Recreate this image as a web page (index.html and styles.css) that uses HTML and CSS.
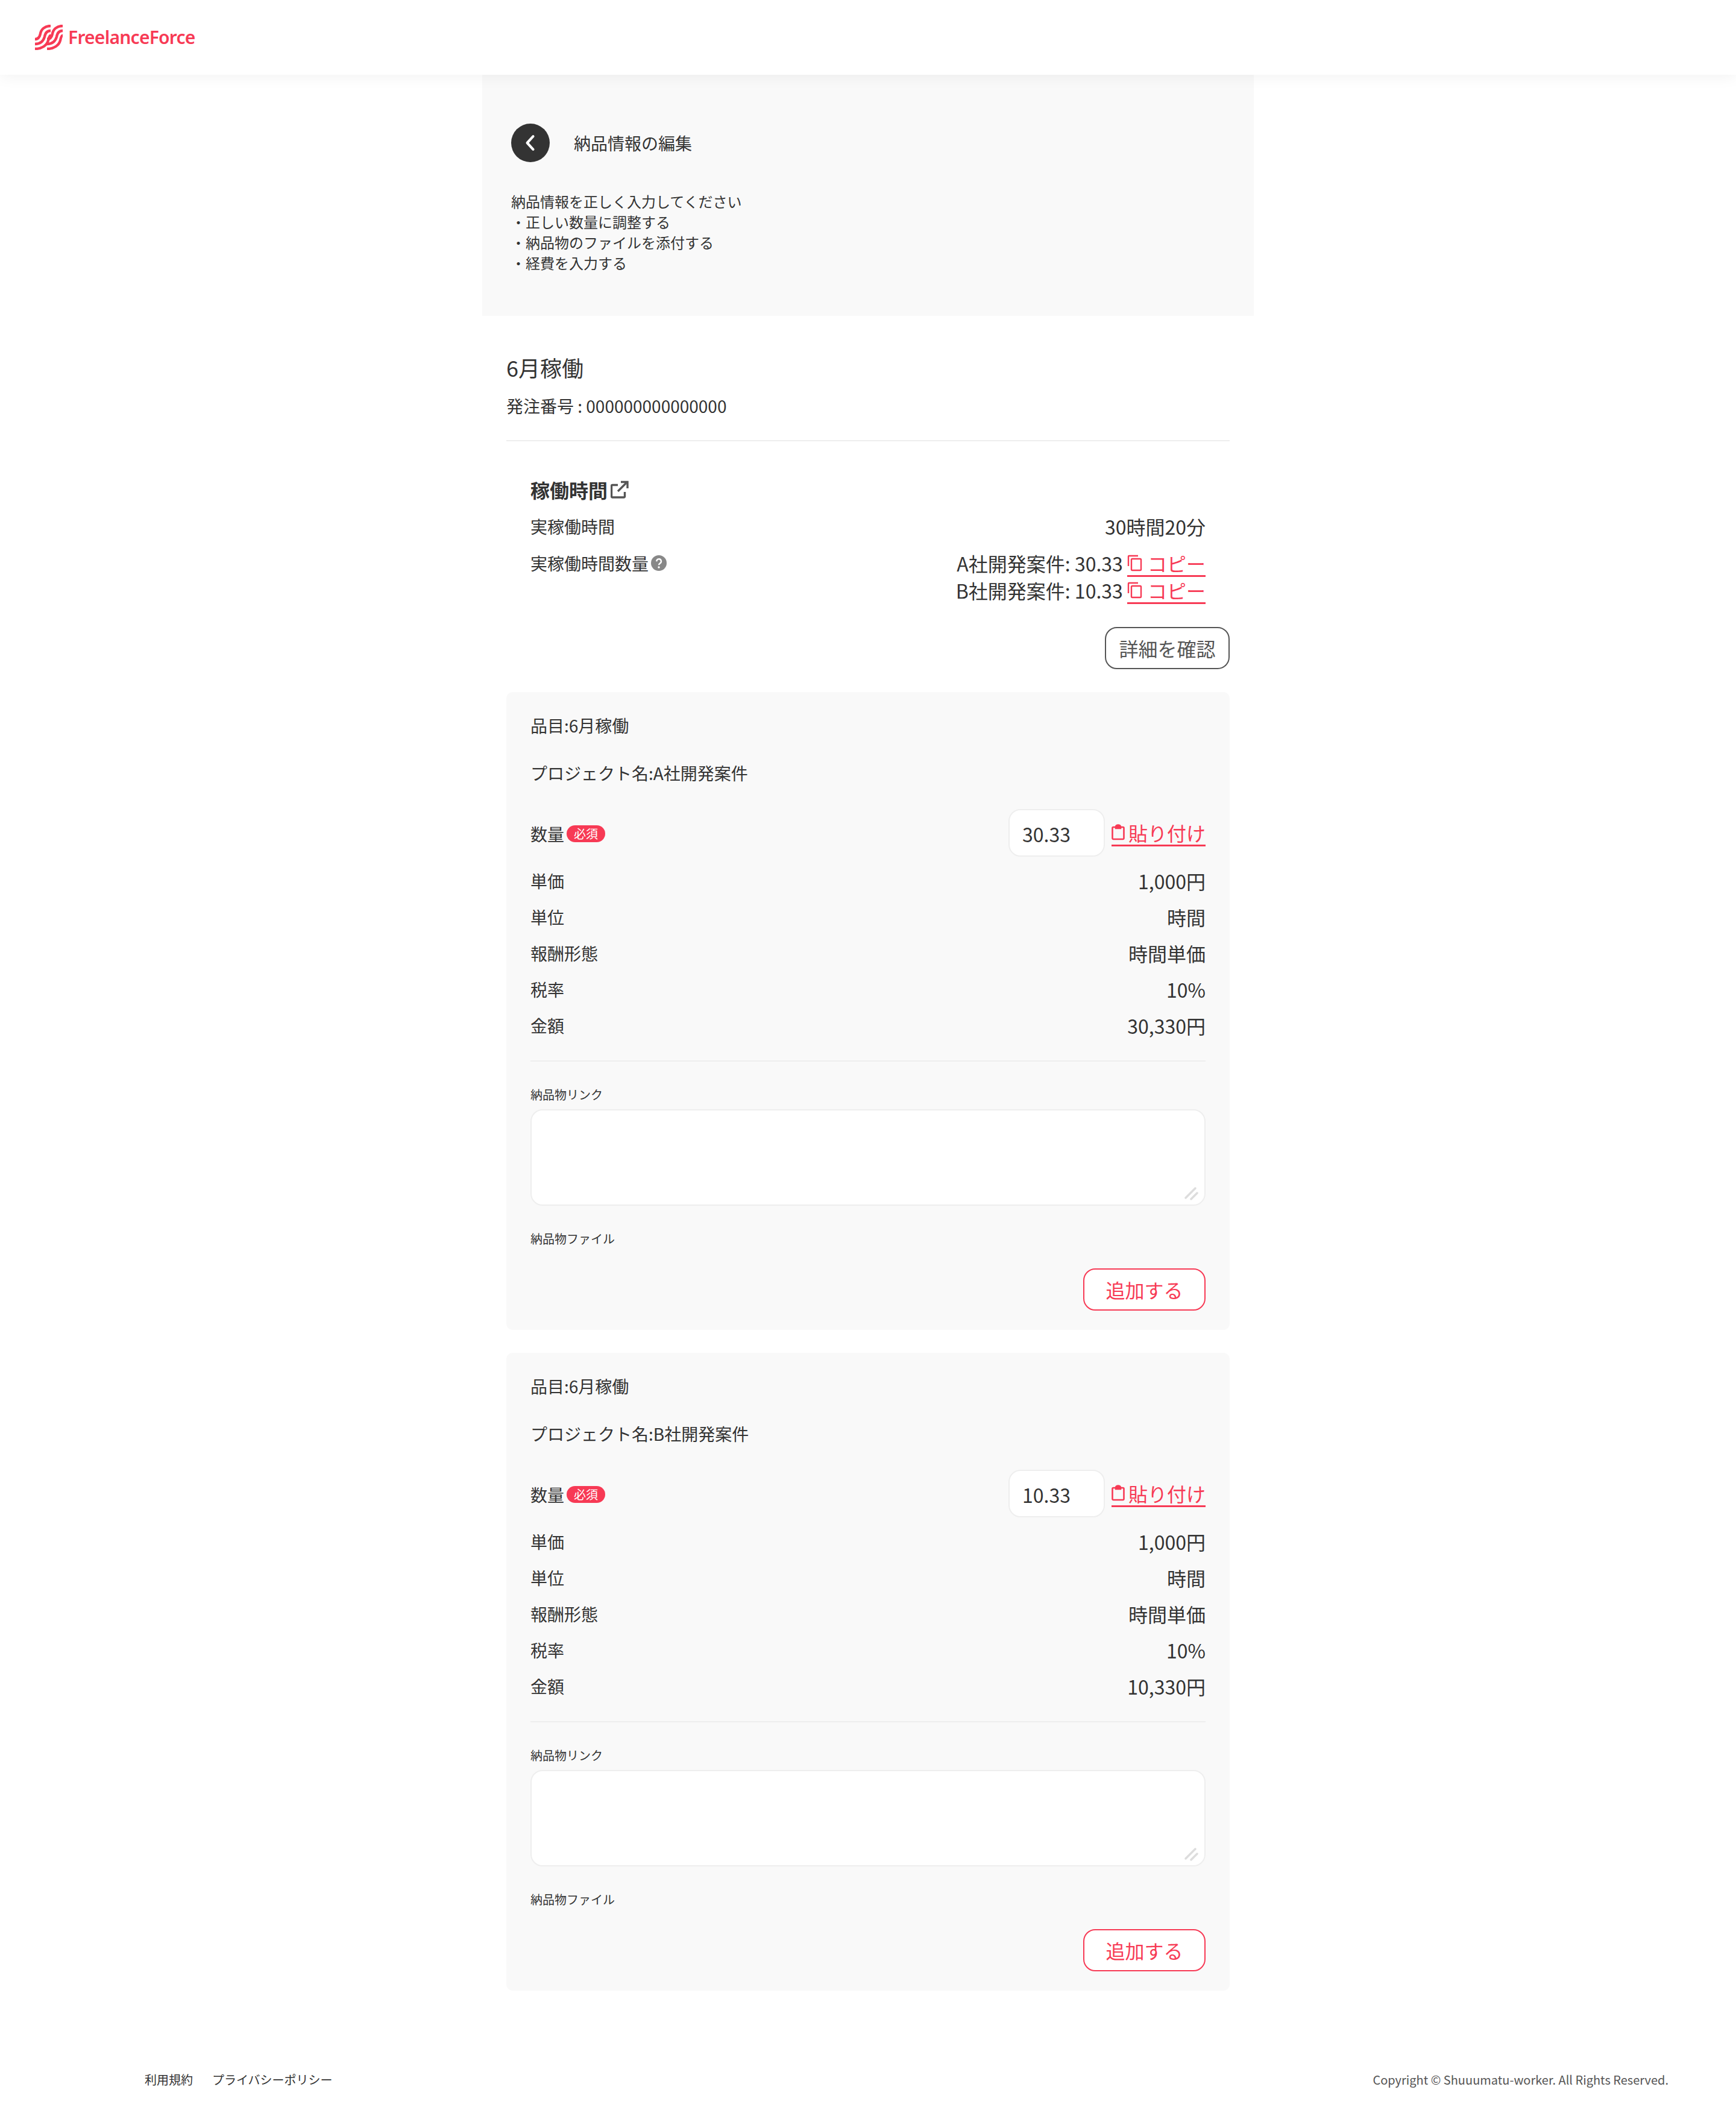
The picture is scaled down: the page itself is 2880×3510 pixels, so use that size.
FILE: index.html
```html
<!DOCTYPE html>
<html lang="ja">
<head>
<meta charset="utf-8">
<title>納品情報の編集</title>
<link rel="stylesheet" href="styles.css">
</head>
<body>
<header class="site-header">
  <svg class="logo-mark" viewBox="0 0 46 42" fill="none" stroke="currentColor" stroke-width="4.4">
    <g>
      <path d="M0 24C6 24 8 20 9 15C10 8 16 2 26 2"/>
      <path d="M0 32C10 32 14 27 16 20C17 14 20 10 26 10"/>
      <path d="M0 40C12 40 20 34 22 26C23 21 24 18 26 18"/>
    </g>
    <g class="wave-two">
      <path d="M0 24C6 24 8 20 9 15C10 8 16 2 26 2"/>
      <path d="M0 32C10 32 14 27 16 20C17 14 20 10 26 10"/>
      <path d="M0 40C12 40 20 34 22 26C23 21 24 18 26 18"/>
    </g>
  </svg>
  <span class="logo-text">FreelanceForce</span>
</header>

<main class="page">
  <section class="intro">
    <div class="intro-head">
      <a class="back" href="#">
        <svg viewBox="0 0 20 20" fill="none" stroke="currentColor" stroke-width="2.300" stroke-linecap="round" stroke-linejoin="round"><path d="M12.500 4L7 10l5.500 6"/></svg>
      </a>
      <h1 class="intro-title">納品情報の編集</h1>
    </div>
    <div class="intro-text">
      <p>納品情報を正しく入力してください</p>
      <p>・正しい数量に調整する</p>
      <p>・納品物のファイルを添付する</p>
      <p>・経費を入力する</p>
    </div>
  </section>

  <section class="content">
    <div class="order">
      <h2 class="order-title">6月稼働</h2>
      <p class="order-number">発注番号 : 000000000000000</p>
    </div>

    <div class="work">
      <h3 class="work-title">稼働時間
        <svg class="ext-icon" viewBox="0 0 30 30" fill="none" stroke="currentColor" stroke-width="3.400"><path d="M12 7.500H3a1.500 1.500 0 0 0-1.500 1.500v17.500A1.500 1.500 0 0 0 3 28h19a1.500 1.500 0 0 0 1.500-1.500V19"/><path d="M12 18L26 4"/><path d="M17 2.500h11V13"/></svg>
      </h3>
      <div class="work-row">
        <span class="label">実稼働時間</span>
        <span class="value">30時間20分</span>
      </div>
      <div class="work-row work-row-qty">
        <span class="label label-help">実稼働時間数量
          <svg class="help-icon" viewBox="0 0 26 26"><circle cx="13" cy="13" r="13" fill="#888"/><path d="M9.300 10.200a3.800 3.800 0 1 1 5.700 3.200c-1.300.8-2 1.400-2 2.900" fill="none" stroke="#fff" stroke-width="2.400"/><circle cx="13" cy="20" r="1.700" fill="#fff"/></svg>
        </span>
        <div class="copy-list">
          <div class="copy-line">A社開発案件: 30.33 <a class="copy-link" href="#"><svg class="copy-icon" viewBox="0 0 26 28" fill="none" stroke="currentColor" stroke-width="2.400"><path d="M2 19V3a1 1 0 0 1 1-1h15"/><rect x="7" y="7" width="16" height="19" rx="1.500"/></svg><span>コピー</span></a></div>
          <div class="copy-line">B社開発案件: 10.33 <a class="copy-link" href="#"><svg class="copy-icon" viewBox="0 0 26 28" fill="none" stroke="currentColor" stroke-width="2.400"><path d="M2 19V3a1 1 0 0 1 1-1h15"/><rect x="7" y="7" width="16" height="19" rx="1.500"/></svg><span>コピー</span></a></div>
        </div>
      </div>
      <div class="work-action"><a class="btn btn-gray" href="#">詳細を確認</a></div>
    </div>

    <article class="card">
      <p class="card-line card-item">品目:6月稼働</p>
      <p class="card-line card-project">プロジェクト名:A社開発案件</p>
      <div class="qty">
        <span class="qty-label"><span class="label">数量</span><span class="badge">必須</span></span>
        <span class="qty-field">
          <input class="qty-input" type="text" value="30.33">
          <a class="paste-link" href="#"><svg class="paste-icon" viewBox="0 0 22 27" fill="none" stroke="currentColor" stroke-width="2.600"><path d="M6 5H3a1.500 1.500 0 0 0-1.500 1.500v17A1.500 1.500 0 0 0 3 25h16a1.500 1.500 0 0 0 1.500-1.500v-17A1.500 1.500 0 0 0 19 5h-3"/><path d="M7 7V4.500a4 3 0 0 1 8 0V7z" fill="currentColor"/></svg><span>貼り付け</span></a>
        </span>
      </div>
      <dl class="rows">
        <div class="row"><dt class="label">単価</dt><dd class="value">1,000円</dd></div>
        <div class="row"><dt class="label">単位</dt><dd class="value">時間</dd></div>
        <div class="row"><dt class="label">報酬形態</dt><dd class="value">時間単価</dd></div>
        <div class="row"><dt class="label">税率</dt><dd class="value">10%</dd></div>
        <div class="row"><dt class="label">金額</dt><dd class="value">30,330円</dd></div>
      </dl>
      <hr class="rule">
      <label class="small-label small-link">納品物リンク</label>
      <div class="area-wrap">
        <textarea class="link-area"></textarea>
        <svg class="grip" viewBox="0 0 24 24" fill="none" stroke="#ddd" stroke-width="3.500" stroke-linecap="round"><path d="M3 19L19 3"/><path d="M12 21L22 11"/></svg>
      </div>
      <label class="small-label small-file">納品物ファイル</label>
      <div class="card-action"><a class="btn btn-red" href="#">追加する</a></div>
    </article>

    <article class="card">
      <p class="card-line card-item">品目:6月稼働</p>
      <p class="card-line card-project">プロジェクト名:B社開発案件</p>
      <div class="qty">
        <span class="qty-label"><span class="label">数量</span><span class="badge">必須</span></span>
        <span class="qty-field">
          <input class="qty-input" type="text" value="10.33">
          <a class="paste-link" href="#"><svg class="paste-icon" viewBox="0 0 22 27" fill="none" stroke="currentColor" stroke-width="2.600"><path d="M6 5H3a1.500 1.500 0 0 0-1.500 1.500v17A1.500 1.500 0 0 0 3 25h16a1.500 1.500 0 0 0 1.500-1.500v-17A1.500 1.500 0 0 0 19 5h-3"/><path d="M7 7V4.500a4 3 0 0 1 8 0V7z" fill="currentColor"/></svg><span>貼り付け</span></a>
        </span>
      </div>
      <dl class="rows">
        <div class="row"><dt class="label">単価</dt><dd class="value">1,000円</dd></div>
        <div class="row"><dt class="label">単位</dt><dd class="value">時間</dd></div>
        <div class="row"><dt class="label">報酬形態</dt><dd class="value">時間単価</dd></div>
        <div class="row"><dt class="label">税率</dt><dd class="value">10%</dd></div>
        <div class="row"><dt class="label">金額</dt><dd class="value">10,330円</dd></div>
      </dl>
      <hr class="rule">
      <label class="small-label small-link">納品物リンク</label>
      <div class="area-wrap">
        <textarea class="link-area"></textarea>
        <svg class="grip" viewBox="0 0 24 24" fill="none" stroke="#ddd" stroke-width="3.500" stroke-linecap="round"><path d="M3 19L19 3"/><path d="M12 21L22 11"/></svg>
      </div>
      <label class="small-label small-file">納品物ファイル</label>
      <div class="card-action"><a class="btn btn-red" href="#">追加する</a></div>
    </article>
  </section>
</main>

<footer class="site-footer">
  <nav class="footer-links">
    <a href="#">利用規約</a>
    <a href="#">プライバシーポリシー</a>
  </nav>
  <small class="copyright">Copyright © Shuuumatu-worker. All Rights Reserved.</small>
</footer>
</body>
</html>
```

FILE: styles.css
```css
* { box-sizing: border-box; }
html, body { margin: 0; padding: 0; background: #fff; }
body {
  font-family: "Noto Sans CJK JP", "Noto Sans", sans-serif;
  font-weight: 400;
  color: #333;
  font-size: 28px;
}
h1, h2, h3, p, dl, dd { margin: 0; font-weight: 400; }
a { color: inherit; text-decoration: none; }

.site-header {
  position: relative;
  height: 124px;
  display: flex;
  align-items: center;
  gap: 9px;
  padding: 0 58px;
  background: #fff;
  color: #f73a55;
  box-shadow: 0 4px 24px rgba(0, 0, 0, 0.05);
}
.logo-mark { width: 46px; height: 42px; flex: none; margin-top: -1px; }
.wave-two { transform: translateX(20px); }
.logo-text { font-family: "Noto Sans", sans-serif; font-size: 30px; font-weight: 600; line-height: 1; letter-spacing: -0.75px; }

.page { width: 1280px; margin: 0 auto; }

.intro { height: 400px; padding: 81px 48px 0; background: #f9f9f9; }
.intro-head { display: flex; align-items: center; gap: 40px; }
.back {
  width: 64px;
  height: 64px;
  border-radius: 50%;
  display: flex;
  align-items: center;
  justify-content: center;
  background: #333;
  color: #fff;
}
.back svg { width: 36px; height: 36px; }
.intro-title { font-size: 28px; line-height: 64px; }
.intro-text { margin-top: 48px; font-size: 24px; line-height: 34px; }

.content { padding: 0 40px; }

.order { padding: 59px 0 37px; border-bottom: 2px solid #eee; }
.order-title { font-size: 36px; line-height: 52px; }
.order-number { margin-top: 18px; font-size: 28px; line-height: 40px; }

.work { padding: 0 0 0 40px; }
.work-title {
  display: flex;
  align-items: center;
  gap: 5px;
  margin-top: 57px;
  font-size: 32px;
  font-weight: 700;
  line-height: 46px;
}
.ext-icon { width: 30px; height: 30px; color: #555; }
.work-row { display: flex; justify-content: space-between; margin-top: 16px; padding-right: 40px; line-height: 44px; }
.work-row-qty { margin-top: 17px; align-items: flex-start; }
.label { font-size: 28px; }
.label-help { display: flex; align-items: center; gap: 4px; }
.help-icon { width: 26px; height: 26px; }
.value { font-size: 32px; }
.copy-list { font-size: 32px; text-align: right; }
.copy-line { line-height: 44px; }
.copy-link {
  display: inline-flex;
  align-items: center;
  height: 45px;
  padding-top: 1px;
  color: #f73a55;
  border-bottom: 3px solid #f73a55;
  line-height: 36px;
  vertical-align: top;
}
.copy-icon { width: 26px; height: 28px; margin-right: 8px; }
.work-action { display: flex; justify-content: flex-end; margin-top: 38px; }

.btn {
  display: flex;
  align-items: center;
  justify-content: center;
  height: 70px;
  border-radius: 20px;
  background: #fff;
  font-size: 32px;
}
.btn-gray { width: 207px; border: 2.500px solid #555; color: #555; }
.btn-red { width: 203px; border: 2.500px solid #f73a55; color: #f73a55; }

.card { margin-top: 38px; padding: 35px 40px 32px; border-radius: 10px; background: #f9f9f9; }
.card-line { font-size: 28px; line-height: 40px; }
.card-project { margin-top: 39px; }
.qty { display: flex; justify-content: space-between; align-items: center; margin-top: 40px; height: 79px; }
.qty-label { display: flex; align-items: center; gap: 4px; padding-top: 2px; }
.badge {
  width: 64px;
  height: 28px;
  border-radius: 14px;
  background: #f73a55;
  color: #fff;
  font-size: 20px;
  line-height: 28px;
  text-align: center;
}
.qty-field { display: flex; align-items: center; gap: 11px; }
.qty-input {
  width: 160px;
  height: 79px;
  padding: 2px 0 0 21px;
  border: 2px solid #eee;
  border-radius: 20px;
  background: #fff;
  color: #333;
  font: 400 32px "Noto Sans CJK JP", "Noto Sans", sans-serif;
  outline: none;
}
.paste-link {
  display: inline-flex;
  align-items: center;
  height: 45px;
  padding-top: 2px;
  color: #f73a55;
  font-size: 32px;
  line-height: 40px;
  border-bottom: 3px solid #f73a55;
}
.paste-icon { width: 22px; height: 27px; margin: 0 6px 2px 0; }

.rows { margin-top: 10px; }
.row { display: flex; justify-content: space-between; align-items: center; height: 60px; }
.rule { margin: 28px 0 0; border: 0; border-top: 2px solid #eee; }
.small-label { display: block; font-size: 20px; line-height: 30px; }
.small-link { margin-top: 40px; }
.small-file { margin-top: 40px; }
.area-wrap { position: relative; margin-top: 9px; }
.link-area {
  display: block;
  width: 100%;
  height: 160px;
  padding: 16px 20px;
  border: 2px solid #eee;
  border-radius: 20px;
  background: #fff;
  font: 400 28px "Noto Sans CJK JP", sans-serif;
  outline: none;
  resize: none;
}
.grip { position: absolute; right: 12px; bottom: 8px; width: 24px; height: 24px; }
.card-action { display: flex; justify-content: flex-end; margin-top: 34px; }

.site-footer {
  display: flex;
  justify-content: space-between;
  margin-top: 133px;
  padding: 0 112px 42px 240px;
  font-size: 20px;
  line-height: 30px;
}
.footer-links { display: flex; gap: 32px; }
.copyright { font-size: 20px; color: #555; }
```
